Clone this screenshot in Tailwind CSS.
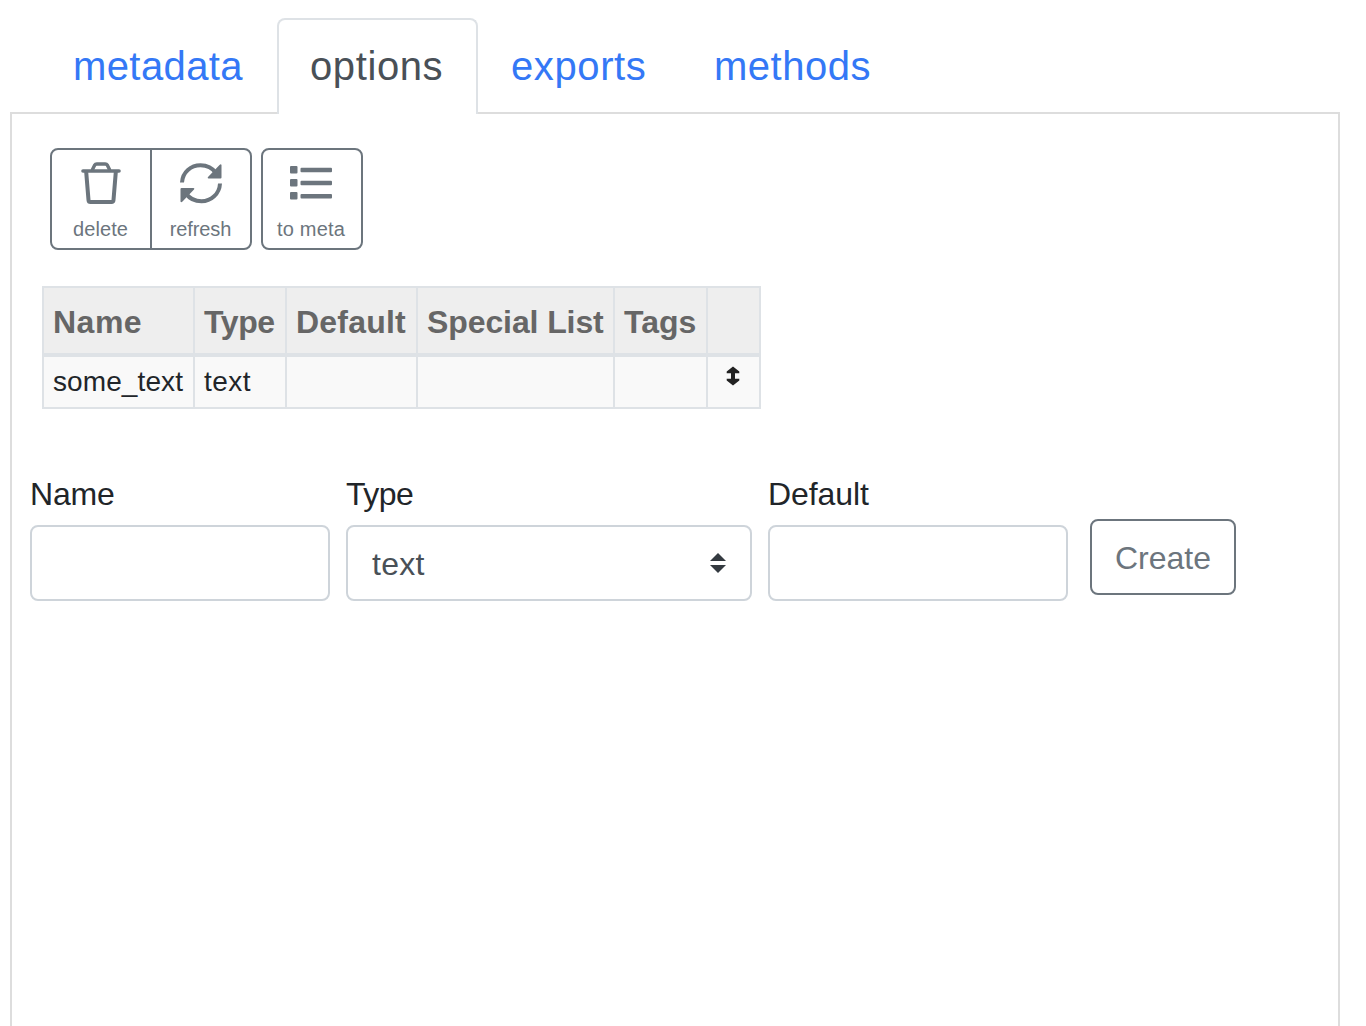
<!DOCTYPE html>
<html lang="en">
<head>
<meta charset="utf-8">
<title>options</title>
<script src="https://cdn.jsdelivr.net/npm/@tailwindcss/browser@4"></script>
</head>
<body class="h-[1026px] overflow-hidden bg-white px-[10px] pt-[18px] font-['Liberation_Sans',Arial,sans-serif] text-[#212529]">
<div class="flex h-[1026px] w-[1330px] flex-col">
  <nav class="flex h-24 shrink-0 pl-[26px] text-[40px] leading-[60px] tracking-[0.5px] text-[#3478f6]">
    <a class="w-[241px] pt-[18px] pl-[37px] tracking-[0.4px]">metadata</a>
    <a class="relative z-10 w-[201px] rounded-t-lg border-2 border-b-0 border-[#dee2e6] bg-white pt-4 pl-[31px] tracking-[0.6px] text-[#495057]">options</a>
    <a class="w-[203px] pt-[18px] pl-[33px] tracking-[0.6px]">exports</a>
    <a class="w-[225px] pt-[18px] pl-[33px]">methods</a>
  </nav>
  <main class="-mt-0.5 grow border-2 border-b-0 border-[#ddd] pl-[18px]">
    <div class="ml-5 mt-[34px] flex gap-[9px] text-[20px] leading-[30px] text-[#6c757d]">
      <div class="flex h-[102px] w-[202px] divide-x-2 divide-[#6c757d] rounded-lg border-2 border-[#6c757d]">
        <button class="flex w-[100px] flex-col items-center pt-2.5 pr-px">
          <svg class="h-[46px] w-[46px]" viewBox="0 0 46 46" fill="none" stroke="currentColor" stroke-width="4" stroke-linecap="round" stroke-linejoin="round"><path stroke-width="3.6" d="M5 11H41"/><path d="M8.200 12L10.500 40Q10.700 42 12.500 42H33.500Q35.300 42 35.500 40L37.800 12"/><path stroke-width="3.400" d="M14.500 9.500L16.600 5.200Q17.300 4 18.800 4H27.200Q28.700 4 29.400 5.200L31.500 9.500"/></svg>
          <span class="mt-2 block tracking-[0.1px]">delete</span>
        </button>
        <button class="flex w-[98px] flex-col items-center pt-2.5 pr-px">
          <svg class="h-[46px] w-[46px]" viewBox="0 0 46 46"><path fill="none" stroke="currentColor" stroke-width="4" stroke-linecap="butt" d="M4 22.500C4.500 12 13 5.200 22.500 5.200C29 5.200 34.500 8 38 13M42 23.500C41.500 34 33 41.300 23.500 41.300C17 41.300 11.500 38.500 8 33.500"/><path fill="currentColor" d="M43.500 5V17.500Q43.500 18.500 42.500 18.500H30.500Q29 18.100 30 17L41.500 5Q43 3.500 43.500 5ZM2.500 41.500V29Q2.500 28 3.500 28H15.500Q17 28.400 16 29.500L4.500 41.500Q3 43 2.500 41.500Z"/></svg>
          <span class="mt-2 block tracking-[-0.1px]">refresh</span>
        </button>
      </div>
      <button class="flex h-[102px] w-[102px] flex-col items-center rounded-lg border-2 border-[#6c757d] pt-2.5 pr-0.5">
        <svg class="h-[46px] w-[46px]" viewBox="0 0 46 46" fill="currentColor"><rect x="2" y="6" width="7.500" height="7.500" rx="1"/><rect x="2" y="19" width="7.500" height="7.500" rx="1"/><rect x="2" y="32" width="7.500" height="7.500" rx="1"/><rect x="12.500" y="7.800" width="31.500" height="4.400" rx="1"/><rect x="12.500" y="20.800" width="31.500" height="4.400" rx="1"/><rect x="12.500" y="34" width="31.500" height="4.400" rx="1"/></svg>
        <span class="mt-2 block whitespace-nowrap tracking-[0.2px]">to meta</span>
      </button>
    </div>
    <table class="ml-3 mt-9 w-[719px] table-fixed border-collapse text-left">
      <colgroup><col class="w-[151px]"><col class="w-[92px]"><col class="w-[131px]"><col class="w-[197px]"><col class="w-[93px]"><col class="w-[53px]"></colgroup>
      <thead>
        <tr class="h-[68px] whitespace-nowrap bg-[#eee] text-[32px] leading-[48px] text-[#666]">
          <th class="border-2 border-b-4 border-[#dee2e6] p-0 pt-0.5 pl-[9px] tracking-[0.5px]">Name</th>
          <th class="border-2 border-b-4 border-[#dee2e6] p-0 pt-0.5 pl-[9px] tracking-[-0.4px]">Type</th>
          <th class="border-2 border-b-4 border-[#dee2e6] p-0 pt-0.5 pl-[9px] tracking-[0.2px]">Default</th>
          <th class="border-2 border-b-4 border-[#dee2e6] p-0 pt-0.5 pl-[9px] tracking-[-0.1px]">Special List</th>
          <th class="border-2 border-b-4 border-[#dee2e6] p-0 pt-0.5 pl-[9px]">Tags</th>
          <th class="border-2 border-b-4 border-[#dee2e6] p-0"></th>
        </tr>
      </thead>
      <tbody>
        <tr class="h-[53px] bg-[#f9f9f9] text-[28px] leading-[42px]">
          <td class="border-2 border-[#dee2e6] p-0 pl-[9px] tracking-[0.1px]">some_text</td>
          <td class="border-2 border-[#dee2e6] p-0 pl-[9px] tracking-[0.5px]">text</td>
          <td class="border-2 border-[#dee2e6] p-0"></td>
          <td class="border-2 border-[#dee2e6] p-0"></td>
          <td class="border-2 border-[#dee2e6] p-0"></td>
          <td class="border-2 border-[#dee2e6] p-0 pr-0.5 align-top">
            <svg class="mx-auto mt-[9px] h-5 w-3.5" viewBox="0 0 14 20" fill="#222"><path d="M7 0.500L13.300 5.500V7.200H9V12.800H13.300V14.500L7 19.500L0.700 14.500V12.800H5V7.200H0.700V5.500Z"/></svg>
          </td>
        </tr>
      </tbody>
    </table>
    <form class="mt-[61px] flex text-[32px] leading-[48px]">
      <label class="mr-4 w-[300px] tracking-[-0.2px]">Name<span class="mt-[7px] block h-[76px] rounded-lg border-2 border-[#ced4da]"></span></label>
      <label class="mr-4 w-[406px] tracking-[-0.5px]">Type<span class="mt-[7px] flex h-[76px] items-center justify-between rounded-lg border-2 border-[#ced4da] pl-6 pr-6 tracking-[0.3px] text-[#495057]"><span class="pt-0.5">text</span><svg class="h-5 w-4" viewBox="0 0 16 20" fill="#343a40"><path d="M8 0L16 8H0ZM0 12H16L8 20Z"/></svg></span></label>
      <label class="mr-[22px] w-[300px] tracking-[-0.1px]">Default<span class="mt-[7px] block h-[76px] rounded-lg border-2 border-[#ced4da]"></span></label>
      <button type="button" class="mt-[49px] h-[76px] w-[146px] rounded-lg border-2 border-[#6c757d] pt-0.5 text-[#6c757d]">Create</button>
    </form>
  </main>
</div>
</body>
</html>
